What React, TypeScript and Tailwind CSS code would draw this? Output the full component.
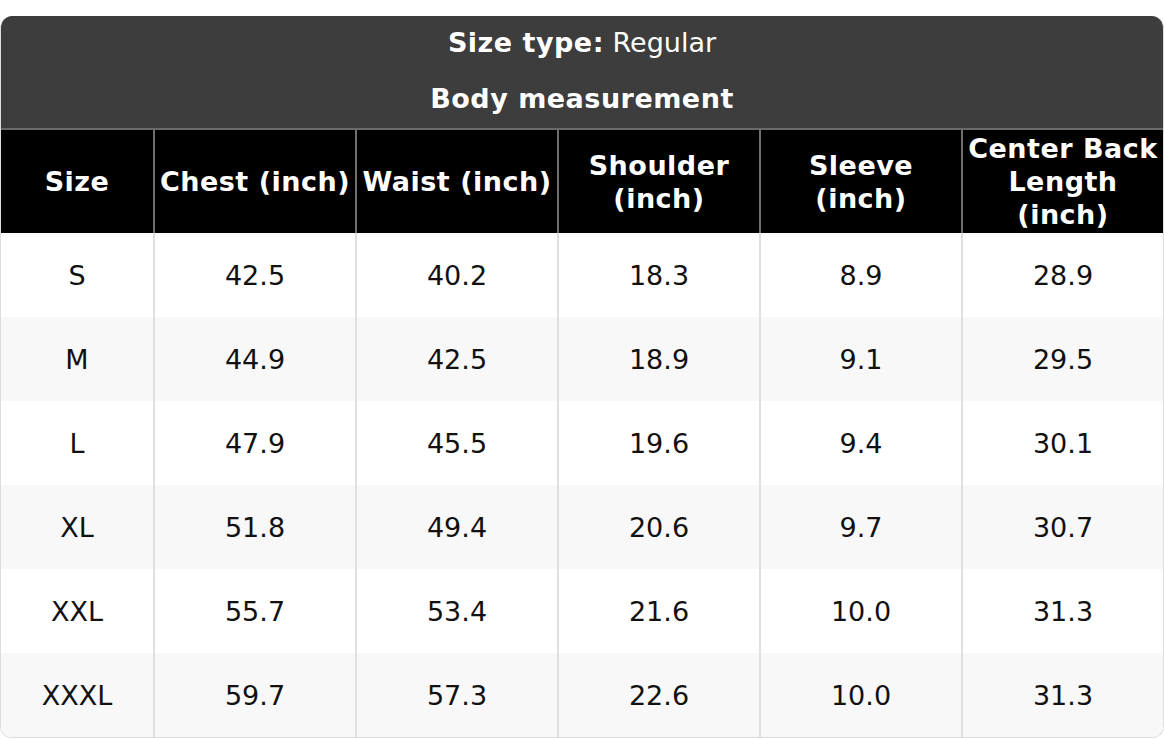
import React from "react";

const headers = ["Size", "Chest (inch)", "Waist (inch)", "Shoulder (inch)", "Sleeve (inch)", "Center Back Length (inch)"];
const rows = [
  ["S", "42.5", "40.2", "18.3", "8.9", "28.9"],
  ["M", "44.9", "42.5", "18.9", "9.1", "29.5"],
  ["L", "47.9", "45.5", "19.6", "9.4", "30.1"],
  ["XL", "51.8", "49.4", "20.6", "9.7", "30.7"],
  ["XXL", "55.7", "53.4", "21.6", "10.0", "31.3"],
  ["XXXL", "59.7", "57.3", "22.6", "10.0", "31.3"],
];

export default function App() {
  return (
    <div className="bg-white w-[1164px] h-[739px] pt-4" style={{ fontFamily: '"DejaVu Sans", sans-serif' }}>
      <div className="w-[1164px] rounded-[12px] overflow-hidden border border-[#dcdcdc] border-t-0">
        <div className="bg-[#3d3d3d] text-white text-[27px] leading-[33px] text-center pt-[10px] pb-[13px]">
          <div className="h-[34px]">
            <span className="font-bold tracking-[0.5px]">Size type:</span> Regular
          </div>
          <div className="mt-[22px] font-bold tracking-[0.5px]">Body measurement</div>
        </div>
        <div className="grid grid-cols-[152px_repeat(5,1fr)] border-t-2 border-[#6a6a6a]">
          {headers.map((h, i) => (
            <div
              key={h}
              className={`bg-black text-white font-bold tracking-[0.5px] text-[27px] leading-[33px] text-center h-[103px] flex items-center justify-center px-0 ${i > 0 ? "border-l-2 border-[#6e6e6e]" : ""}`}
            >
              {h}
            </div>
          ))}
          {rows.map((r, ri) =>
            r.map((c, ci) => (
              <div
                key={ri + "-" + ci}
                className={`${ri % 2 === 1 ? "bg-[#f8f8f8]" : "bg-white"} text-[#111] text-[27px] leading-[33px] text-center h-[84px] flex items-center justify-center ${ci > 0 ? "border-l-2 border-[#e0e0e0]" : ""}`}
              >
                {c}
              </div>
            ))
          )}
        </div>
      </div>
    </div>
  );
}
